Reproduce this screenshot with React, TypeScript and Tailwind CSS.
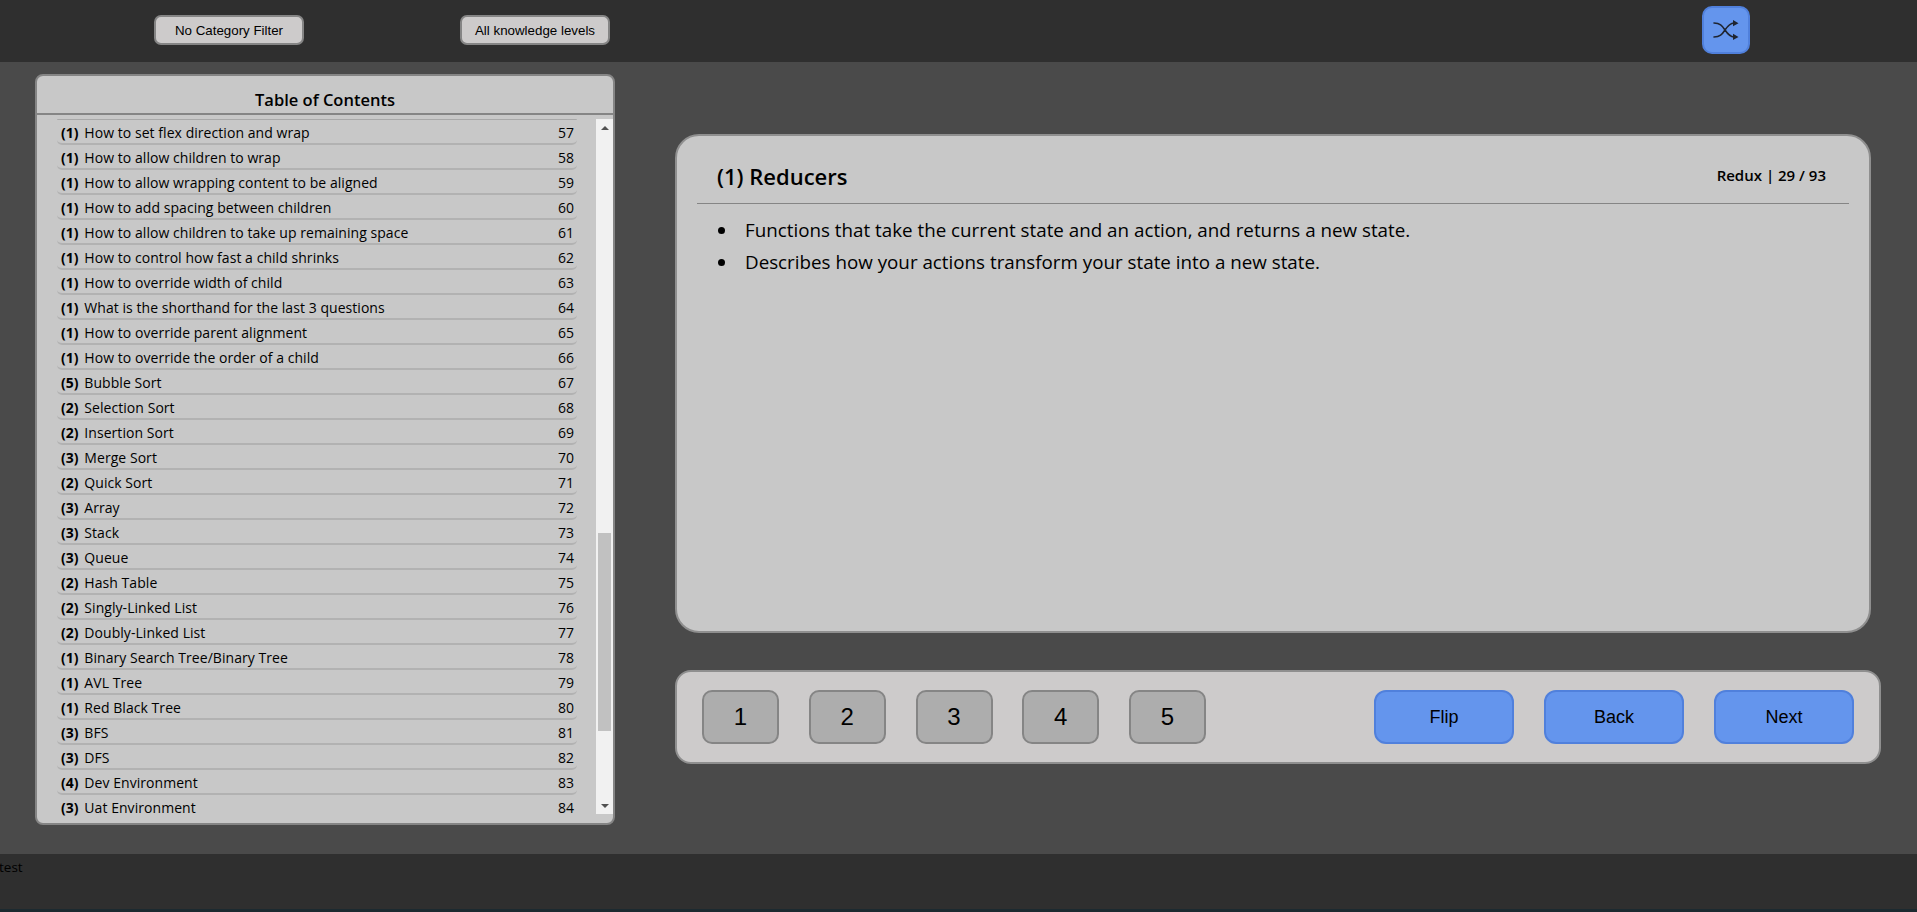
const rows: [number, string, number][] = [
  [1, "How to set flex direction and wrap", 57],
  [1, "How to allow children to wrap", 58],
  [1, "How to allow wrapping content to be aligned", 59],
  [1, "How to add spacing between children", 60],
  [1, "How to allow children to take up remaining space", 61],
  [1, "How to control how fast a child shrinks", 62],
  [1, "How to override width of child", 63],
  [1, "What is the shorthand for the last 3 questions", 64],
  [1, "How to override parent alignment", 65],
  [1, "How to override the order of a child", 66],
  [5, "Bubble Sort", 67],
  [2, "Selection Sort", 68],
  [2, "Insertion Sort", 69],
  [3, "Merge Sort", 70],
  [2, "Quick Sort", 71],
  [3, "Array", 72],
  [3, "Stack", 73],
  [3, "Queue", 74],
  [2, "Hash Table", 75],
  [2, "Singly-Linked List", 76],
  [2, "Doubly-Linked List", 77],
  [1, "Binary Search Tree/Binary Tree", 78],
  [1, "AVL Tree", 79],
  [1, "Red Black Tree", 80],
  [3, "BFS", 81],
  [3, "DFS", 82],
  [4, "Dev Environment", 83],
  [3, "Uat Environment", 84],
];

function ShuffleIcon() {
  return (
    <svg width="26" height="20" viewBox="0 0 26 20" fill="none">
      <path
        d="M1 3C7 3 9 5.5 12 10C15 14.5 17 16.8 21 17M1 17C7 17 9 14.5 12 10C15 5.5 17 3.2 21 3"
        stroke="#1f2530"
        strokeWidth="1.6"
        strokeLinecap="round"
      />
      <path d="M20 0L25.5 3.2L20 6.2Z" fill="#1f2530" />
      <path d="M20 13.8L25.5 17L20 20Z" fill="#1f2530" />
    </svg>
  );
}

function FilterButton({ label }: { label: string }) {
  return (
    <button className="w-[150px] h-[30px] pt-[1px] rounded-[7px] border-2 border-[#858585] bg-[#cdcbcb] text-[13.33px] text-black font-['Liberation_Sans',sans-serif]">
      {label}
    </button>
  );
}

function RatingButton({ label }: { label: string }) {
  return (
    <button className="w-[77px] h-[54px] rounded-[10px] border-2 border-[#858585] bg-[#adadad] text-[24px] text-black font-['Liberation_Sans',sans-serif]">
      {label}
    </button>
  );
}

function ActionButton({ label }: { label: string }) {
  return (
    <button className="w-[140px] h-[54px] rounded-[12px] border-2 border-[#5080dc] bg-[#6495ed] text-[18px] text-black font-['Liberation_Sans',sans-serif]">
      {label}
    </button>
  );
}

export default function App() {
  return (
    <div className="w-[1917px] h-[912px] flex flex-col overflow-hidden bg-[#4a4a4a] font-['Open_Sans',sans-serif] text-black">
      {/* top bar */}
      <header className="h-[62px] shrink-0 bg-[#2f2f2f] flex items-center pb-[2px]">
        <div className="ml-[154px]">
          <FilterButton label="No Category Filter" />
        </div>
        <div className="ml-[156px]">
          <FilterButton label="All knowledge levels" />
        </div>
        <button className="ml-[1092px] w-[48px] h-[48px] rounded-[10px] border-2 border-[#5080dc] bg-[#6495ed] flex items-center justify-center">
          <ShuffleIcon />
        </button>
      </header>

      <main className="h-[792px] shrink-0 flex">
        {/* table of contents */}
        <aside className="ml-[35px] mt-[12px] w-[580px] h-[751px] rounded-[8px] border-2 border-[#858585] bg-[#c8c8c8] flex flex-col overflow-hidden">
          <h2 className="h-[39px] shrink-0 border-b-2 border-[#858585] pt-[11px] text-[16.5px] font-semibold text-center leading-[26px]">
            Table of Contents
          </h2>
          <div className="mt-[4px] h-[695px] flex">
            <div className="w-[559px] pl-[20px] pr-[19px]">
              <div className="border-t border-[#a8a8a8] rounded-t-[4px]" />
              {rows.map(([level, title, page]) => (
                <div
                  key={page}
                  className="h-[25px] flex items-center justify-between border-b-2 border-[#b2b2b2] last:border-b-transparent rounded-b-[5px] pl-[4px] pr-[3px] pt-[1px] text-[14px] leading-[23px] tracking-[0.05px]"
                >
                  <span>
                    <b className="font-bold mr-[2px]">({level})</b> {title}
                  </span>
                  <span>{page}</span>
                </div>
              ))}
            </div>
            {/* scrollbar */}
            <div className="w-[17px] shrink-0 bg-[#f1f1f1] flex flex-col items-center">
              <div className="h-[17px] w-full flex items-center justify-center">
                <div className="border-x-[4px] border-x-transparent border-b-[4px] border-b-[#505050]" />
              </div>
              <div className="h-[397px] shrink-0" />
              <div className="h-[198px] w-[13px] shrink-0 bg-[#c1c1c1]" />
              <div className="flex-1" />
              <div className="h-[17px] w-full flex items-center justify-center">
                <div className="border-x-[4px] border-x-transparent border-t-[4px] border-t-[#505050]" />
              </div>
            </div>
          </div>
        </aside>

        <section className="ml-[60px] flex flex-col">
          {/* card */}
          <div className="mt-[72px] w-[1196px] h-[499px] rounded-[24px] border-2 border-[#8f8f8f] bg-[#c8c8c8] px-[20px]">
            <div className="h-[68px] border-b border-[#858585] flex items-center justify-between pt-[13px] pl-[20px] pr-[23px]">
              <h1 className="text-[22px] font-semibold">(1) Reducers</h1>
              <span className="text-[15px] font-semibold -mt-[1px]">Redux | 29 / 93</span>
            </div>
            <ul className="mt-[10px] pl-[21px] text-[18.8px] leading-[32px]">
              <li className="flex items-center gap-[20px]">
                <span className="w-[7px] h-[7px] rounded-full bg-black" />
                Functions that take the current state and an action, and returns a new state.
              </li>
              <li className="flex items-center gap-[20px]">
                <span className="w-[7px] h-[7px] rounded-full bg-black" />
                Describes how your actions transform your state into a new state.
              </li>
            </ul>
          </div>

          {/* controls */}
          <div className="mt-[37px] w-[1206px] h-[94px] rounded-[16px] border-2 border-[#8f8f8f] bg-[#cdcbcb] flex items-center justify-between pl-[25px] pr-[25px]">
            <div className="flex gap-[29.75px]">
              {["1", "2", "3", "4", "5"].map((n) => (
                <RatingButton key={n} label={n} />
              ))}
            </div>
            <div className="flex gap-[30px]">
              <ActionButton label="Flip" />
              <ActionButton label="Back" />
              <ActionButton label="Next" />
            </div>
          </div>
        </section>
      </main>

      {/* footer */}
      <footer className="h-[55px] shrink-0 bg-[#2f2f2f] pt-[3px] text-[13.5px] leading-[20px] -indent-[1px]">test</footer>
      <div className="flex-1 bg-[#1c2a30]" />
    </div>
  );
}
